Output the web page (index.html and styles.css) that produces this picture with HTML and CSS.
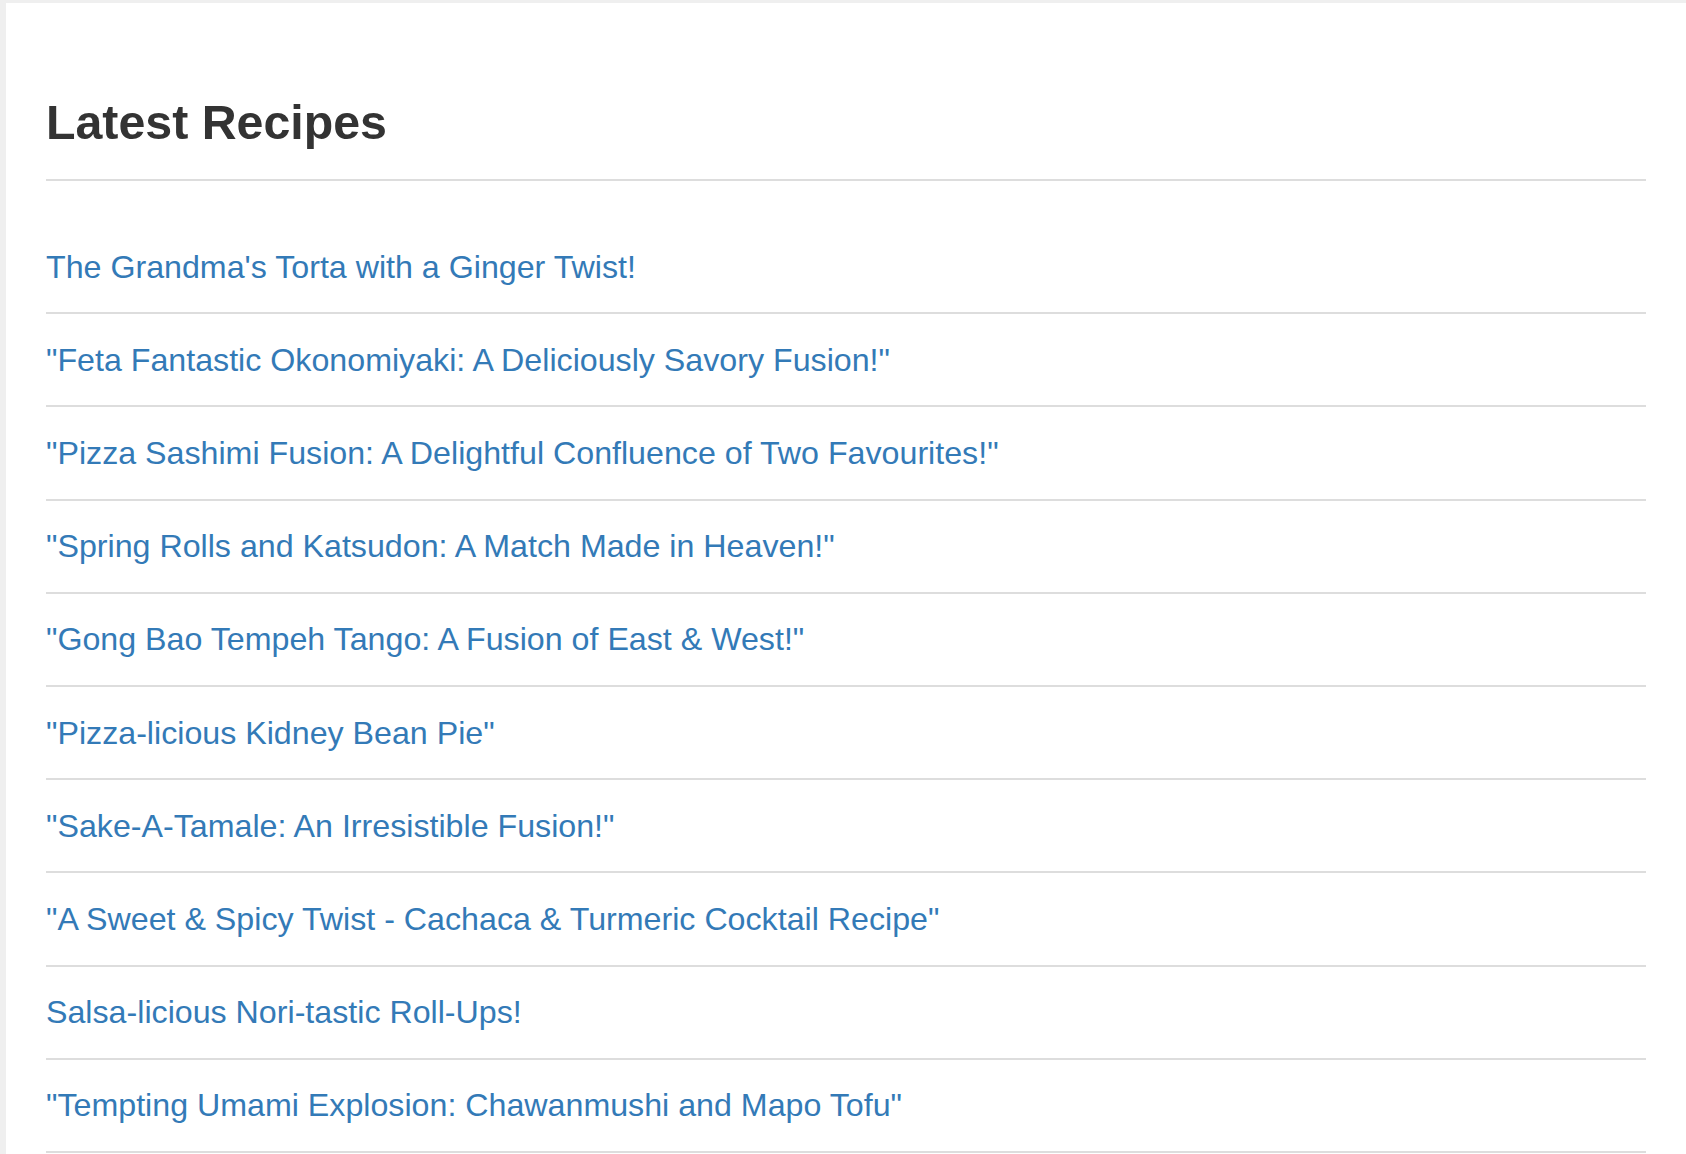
FILE: index.html
```html
<!DOCTYPE html>
<html lang="en">
<head>
<meta charset="utf-8">
<title>Latest Recipes</title>
<link rel="stylesheet" href="styles.css">
</head>
<body>
<main class="panel">
  <header class="page-header">
    <h1 class="title">Latest Recipes</h1>
  </header>
  <ul class="recipe-list">
    <li class="recipe-item"><a class="recipe-link" href="#">The Grandma's Torta with a Ginger Twist!</a></li>
    <li class="recipe-item"><a class="recipe-link" href="#">"Feta Fantastic Okonomiyaki: A Deliciously Savory Fusion!"</a></li>
    <li class="recipe-item"><a class="recipe-link" href="#">"Pizza Sashimi Fusion: A Delightful Confluence of Two Favourites!"</a></li>
    <li class="recipe-item"><a class="recipe-link" href="#">"Spring Rolls and Katsudon: A Match Made in Heaven!"</a></li>
    <li class="recipe-item"><a class="recipe-link" href="#">"Gong Bao Tempeh Tango: A Fusion of East &amp; West!"</a></li>
    <li class="recipe-item"><a class="recipe-link" href="#">"Pizza-licious Kidney Bean Pie"</a></li>
    <li class="recipe-item"><a class="recipe-link" href="#">"Sake-A-Tamale: An Irresistible Fusion!"</a></li>
    <li class="recipe-item"><a class="recipe-link" href="#">"A Sweet &amp; Spicy Twist - Cachaca &amp; Turmeric Cocktail Recipe"</a></li>
    <li class="recipe-item"><a class="recipe-link" href="#">Salsa-licious Nori-tastic Roll-Ups!</a></li>
    <li class="recipe-item"><a class="recipe-link" href="#">"Tempting Umami Explosion: Chawanmushi and Mapo Tofu"</a></li>
  </ul>
</main>
</body>
</html>
```

FILE: styles.css
```css
html, body {
  margin: 0;
  padding: 0;
}

body {
  background: #efefef;
  font-family: "Liberation Sans", Arial, Helvetica, sans-serif;
  overflow: hidden;
}

.panel {
  margin: 3px 0 0 6px;
  background: #ffffff;
  padding: 93px 40px 40px 40px;
  min-height: 1200px;
}

.page-header {
  padding-bottom: 30px;
  border-bottom: 2px solid #dddddd;
}

.title {
  margin: 0;
  font-size: 48.3px;
  line-height: 53px;
  font-weight: 700;
  color: #333333;
}

.recipe-list {
  list-style: none;
  margin: 40px 0 0 0;
  padding: 0;
}

.recipe-item {
  padding: 27.6px 0 26.6px 0;
  line-height: 37px;
  font-size: 32.2px;
  border-bottom: 2px solid #dddddd;
}

.recipe-link {
  color: #337ab7;
  text-decoration: none;
}
```
